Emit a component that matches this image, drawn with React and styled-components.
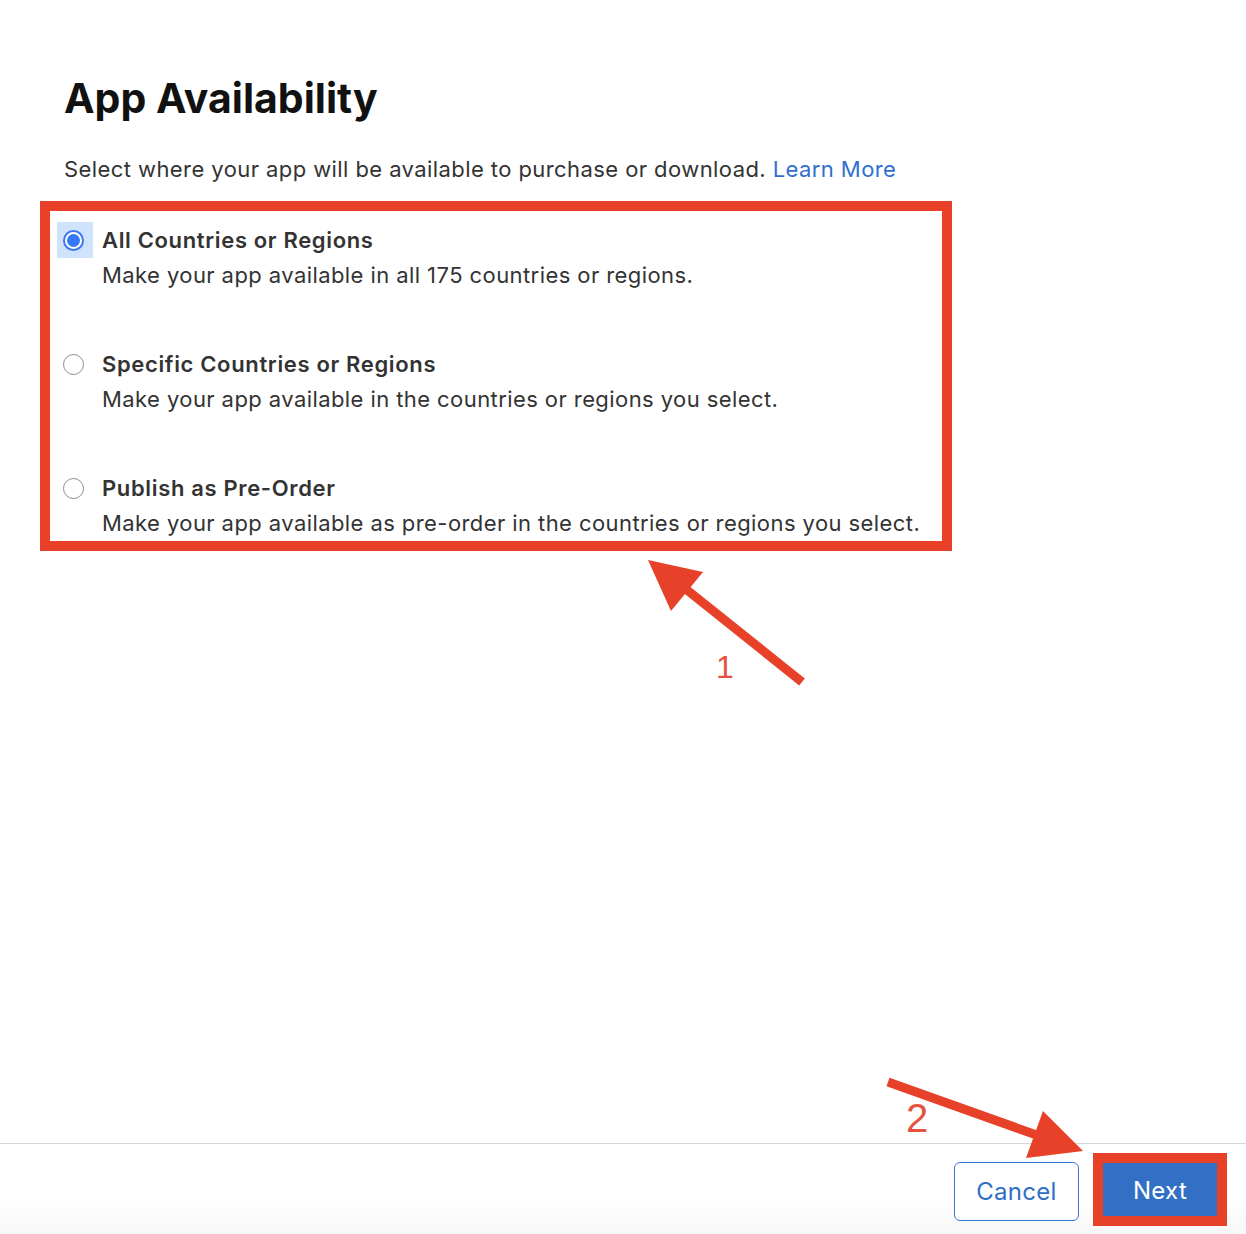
import React from 'react';
import styled, { createGlobalStyle } from 'styled-components';

const GlobalStyle = createGlobalStyle`
  html, body {
    margin: 0;
    padding: 0;
    background: #fff;
  }
  body {
    font-family: Inter, "Noto Sans", "Liberation Sans", sans-serif;
    color: #333;
  }
`;

const Page = styled.div`
  position: relative;
  display: flex;
  flex-direction: column;
  min-height: 1234px;
  overflow: hidden;
`;

const Main = styled.main`
  flex: 1;
  padding: 74px 0 0 64px;
`;

const Title = styled.h1`
  margin: 0;
  font-size: 41px;
  line-height: 48px;
  font-weight: 700;
  color: #111;
`;

const Intro = styled.p`
  margin: 32px 0 17px;
  font-size: 22px;
  line-height: 30px;
  letter-spacing: 0.42px;
  color: #333;
`;

const Link = styled.a`
  color: #2f6fd0;
  text-decoration: none;
`;

const Highlight = styled.div`
  box-sizing: border-box;
  margin-left: -24px;
  width: 912px;
  border: 10px solid #e8412a;
  padding: 12px 0 0 7px;
  display: flex;
  flex-direction: column;
  gap: 54px;
`;

const Option = styled.label`
  display: flex;
  align-items: flex-start;
  gap: 9px;
`;

const RadioBox = styled.span`
  flex: none;
  width: 36px;
  height: 36px;
  margin-top: -1px;
  display: flex;
  align-items: center;
  justify-content: center;
  background: ${p => (p.$focus ? '#cfe3fc' : 'transparent')};
`;

const Radio = styled.span`
  box-sizing: border-box;
  width: 21px;
  height: 21px;
  margin-left: -4px;
  border-radius: 50%;
  background: #fff;
  border: ${p => (p.$checked ? '2px solid #3a78ee' : '1.5px solid #8c8c8c')};
  display: flex;
  align-items: center;
  justify-content: center;

  &::after {
    content: '';
    display: ${p => (p.$checked ? 'block' : 'none')};
    width: 13px;
    height: 13px;
    border-radius: 50%;
    background: #3478f6;
  }
`;

const OptionText = styled.span`
  display: flex;
  flex-direction: column;
`;

const OptionTitle = styled.span`
  font-size: 22px;
  line-height: 35px;
  font-weight: 600;
  letter-spacing: 0.65px;
  color: #333;
`;

const OptionDesc = styled.span`
  font-size: 22px;
  line-height: 35px;
  letter-spacing: 0.42px;
  color: #333;
`;

const Footer = styled.footer`
  height: 90px;
  border-top: 1px solid #d6d6d6;
  background: linear-gradient(to bottom, #fff 60%, #f7f7f7);
  display: flex;
  align-items: center;
  justify-content: flex-end;
  gap: 14px;
  padding-right: 19px;
`;

const CancelButton = styled.button`
  box-sizing: border-box;
  width: 125px;
  height: 59px;
  margin-top: 4px;
  border: 1px solid #3a78d0;
  border-radius: 6px;
  background: #fff;
  color: #2f6fc4;
  font-family: inherit;
  font-size: 24px;
  letter-spacing: 0.3px;
  cursor: pointer;
`;

const NextFrame = styled.div`
  border: 10px solid #e8412a;
  display: flex;
`;

const NextButton = styled.button`
  width: 114px;
  height: 53px;
  padding-top: 3px;
  border: none;
  background: #3170c5;
  color: #fff;
  font-family: inherit;
  font-size: 24px;
  letter-spacing: 0.3px;
  cursor: pointer;
`;

const Annotations = styled.svg`
  position: absolute;
  left: 0;
  top: 0;
  width: 1246px;
  height: 1234px;
  pointer-events: none;
`;

const StepNumber = styled.text`
  font-family: "Liberation Sans", Arial, sans-serif;
  fill: #e5533f;
`;

const options = [
  {
    title: 'All Countries or Regions',
    desc: 'Make your app available in all 175 countries or regions.',
    checked: true,
  },
  {
    title: 'Specific Countries or Regions',
    desc: 'Make your app available in the countries or regions you select.',
  },
  {
    title: 'Publish as Pre-Order',
    desc: 'Make your app available as pre-order in the countries or regions you select.',
  },
];

export default function App() {
  return (
    <Page>
      <GlobalStyle />
      <Main>
        <Title>App Availability</Title>
        <Intro>
          Select where your app will be available to purchase or download.{' '}
          <Link href="#">Learn More</Link>
        </Intro>
        <Highlight>
          {options.map(o => (
            <Option key={o.title}>
              <RadioBox $focus={o.checked}>
                <Radio $checked={o.checked} />
              </RadioBox>
              <OptionText>
                <OptionTitle>{o.title}</OptionTitle>
                <OptionDesc>{o.desc}</OptionDesc>
              </OptionText>
            </Option>
          ))}
        </Highlight>
      </Main>
      <Footer>
        <CancelButton>Cancel</CancelButton>
        <NextFrame>
          <NextButton>Next</NextButton>
        </NextFrame>
      </Footer>

      {/* red callout arrows drawn over the page */}
      <Annotations viewBox="0 0 1246 1234">
        <line x1="802" y1="682" x2="682" y2="586" stroke="#e8412a" strokeWidth="9" />
        <polygon points="648,560 703,572 671,611" fill="#e8412a" />
        <StepNumber x="716" y="678" fontSize="32">1</StepNumber>

        <line x1="888" y1="1082" x2="1045" y2="1138" stroke="#e8412a" strokeWidth="9" />
        <polygon points="1083,1151 1043,1111 1026,1158" fill="#e8412a" />
        <StepNumber x="906" y="1132" fontSize="40">2</StepNumber>
      </Annotations>
    </Page>
  );
}
